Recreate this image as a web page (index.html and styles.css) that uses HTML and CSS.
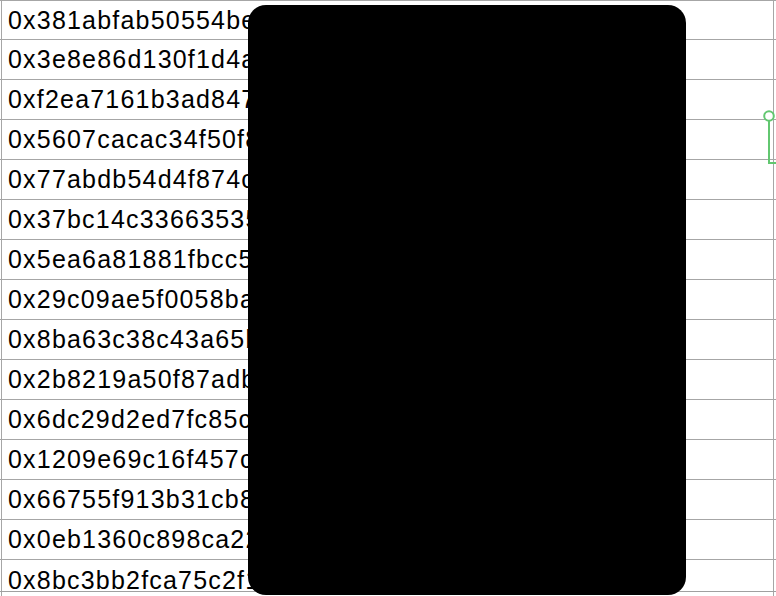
FILE: index.html
```html
<!DOCTYPE html>
<html>
<head>
<meta charset="utf-8">
<link rel="stylesheet" href="styles.css">
</head>
<body>
<div class="sheet">
  <div class="row"><div class="cell">0x381abfab50554be2c7d91a0e</div></div>
  <div class="row"><div class="cell">0x3e8e86d130f1d4a9b02c6e71</div></div>
  <div class="row"><div class="cell">0xf2ea7161b3ad8473c5e0d912</div></div>
  <div class="row"><div class="cell">0x5607cacac34f50f8a1b2c3d4</div></div>
  <div class="row"><div class="cell">0x77abdb54d4f874c0e9f1a2b3</div></div>
  <div class="row"><div class="cell">0x37bc14c33663535a7e2d9c10</div></div>
  <div class="row"><div class="cell">0x5ea6a81881fbcc5d3e4f6a7b</div></div>
  <div class="row"><div class="cell">0x29c09ae5f0058ba6c7d8e9f0</div></div>
  <div class="row"><div class="cell">0x8ba63c38c43a65b1c2d3e4f5</div></div>
  <div class="row"><div class="cell">0x2b8219a50f87adb4e5f6a7b8</div></div>
  <div class="row"><div class="cell">0x6dc29d2ed7fc85c9a0b1c2d3</div></div>
  <div class="row"><div class="cell">0x1209e69c16f457c8d9e0f1a2</div></div>
  <div class="row"><div class="cell">0x66755f913b31cb87a6b5c4d3</div></div>
  <div class="row"><div class="cell">0x0eb1360c898ca22f3e4d5c6b</div></div>
  <div class="row last"><div class="cell">0x8bc3bb2fca75c2f1a2b3c4d5</div></div>
  <div class="row tail"><div class="cell"></div></div>
  <svg class="handle" width="14" height="60" viewBox="0 0 14 60">
    <circle cx="6" cy="6" r="4.8" fill="#ffffff" stroke="#62c770" stroke-width="2"/>
    <path d="M6 10.8 V53 H13" fill="none" stroke="#62c770" stroke-width="2"/>
  </svg>
  <div class="overlay"></div>
</div>
</body>
</html>
```

FILE: styles.css
```css
html, body {
  margin: 0;
  padding: 0;
  background: #ffffff;
  overflow: hidden;
}

.sheet {
  position: relative;
  width: 776px;
  height: 596px;
  overflow: hidden;
  border-top: 1px solid #a6a6a6;
  box-sizing: border-box;
}

.row {
  height: 40px;
  border-bottom: 1px solid #a6a6a6;
  box-sizing: border-box;
  display: flex;
}

.row:first-child {
  height: 39px;
}

.row.last {
  height: 32px;
  border-bottom: 1px solid #a0a0a0;
}

.row.last .cell {
  align-items: flex-start;
  padding-top: 8px;
  line-height: 24px;
  overflow: visible;
}

.row.tail {
  height: 10px;
  border-bottom: none;
}

.cell {
  box-sizing: border-box;
  margin-left: 1px;
  width: 773px;
  border-left: 1px solid #a6a6a6;
  border-right: 1px solid #a6a6a6;
  padding-left: 6px;
  display: flex;
  align-items: center;
  font-family: "Liberation Sans", Arial, sans-serif;
  font-size: 25px;
  letter-spacing: 1.2px;
  color: #000000;
  white-space: nowrap;
  overflow: hidden;
}

.handle {
  position: absolute;
  left: 763px;
  top: 109px;
}

.overlay {
  position: absolute;
  left: 248px;
  top: 4px;
  width: 438px;
  height: 590px;
  background: #000000;
  border-radius: 18px;
}
```
